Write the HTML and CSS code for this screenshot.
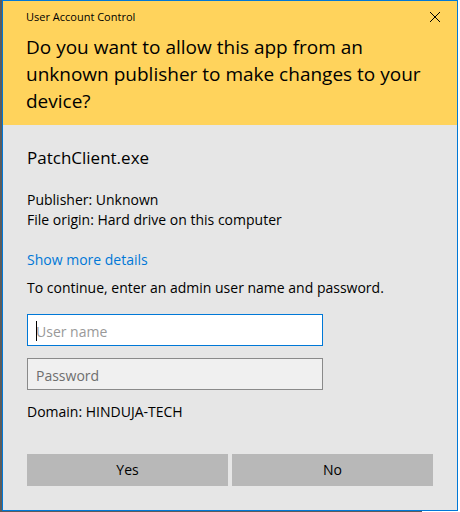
FILE: index.html
```html
<!DOCTYPE html>
<html lang="en">
<head>
<meta charset="utf-8">
<meta name="viewport" content="width=device-width, initial-scale=1">
<title>User Account Control</title>
<link rel="stylesheet" href="styles.css">
</head>
<body>
<main class="dialog">
  <header class="banner">
    <div class="titlebar">
      <span class="caption">User Account Control</span>
      <button class="close" type="button" aria-label="Close">
        <svg class="close-icon" viewBox="0 0 10 10" aria-hidden="true"><path d="M0 0L10 10M10 0L0 10"/></svg>
      </button>
    </div>
    <h1 class="question">Do you want to allow this app from an unknown publisher to make changes to your device?</h1>
  </header>
  <form class="content">
    <h2 class="program">PatchClient.exe</h2>
    <p class="text">Publisher: Unknown</p>
    <p class="text">File origin: Hard drive on this computer</p>
    <a class="details" href="#">Show more details</a>
    <p class="text">To continue, enter an admin user name and password.</p>
    <div class="fields">
      <div class="field active">
        <span class="caret"></span>
        <input class="input" type="text" placeholder="User name" aria-label="User name">
      </div>
      <div class="field">
        <input class="input" type="password" placeholder="Password" aria-label="Password">
      </div>
    </div>
    <p class="text">Domain: HINDUJA-TECH</p>
    <div class="actions">
      <button class="action" type="button">Yes</button>
      <button class="action" type="button">No</button>
    </div>
  </form>
</main>
<div class="backdrop-edge"></div>
</body>
</html>
```
FILE: styles.css
```css
* {
  box-sizing: border-box;
}

body {
  margin: 0;
  padding-right: 2px;
  background: #fff;
  color: #000;
  font: 14px/20px "Open Sans", "Noto Sans", sans-serif;
}

h1, h2, p {
  margin: 0;
  font-weight: 400;
}

.dialog {
  border: 1px solid #0078d7;
  background: #e6e6e6;
  margin-left: 2px;
  box-shadow: -2px 0 #5c5c5c;
}

.banner {
  padding: 4px 17px 10px 23px;
  background: #ffd35c;
}

.titlebar {
  display: flex;
  align-items: center;
  justify-content: space-between;
  height: 24px;
}

.caption {
  font-size: 11px;
}

.close {
  display: flex;
  padding: 0;
  border: 0;
  background: none;
}

.close-icon {
  width: 10px;
  height: 10px;
  overflow: visible;
  fill: none;
  stroke: #000;
  stroke-width: 1;
}

.question {
  padding-top: 5px;
  font-size: 19px;
  line-height: 27px;
}

.content {
  display: flex;
  flex-direction: column;
  padding: 21px 24px 24px;
}

.program {
  margin-bottom: 20px;
  font-size: 17px;
  line-height: 24px;
}

.details {
  align-self: flex-start;
  margin: 20px 0 8px;
  color: #0078d7;
  text-decoration: none;
}

.fields {
  display: grid;
  gap: 12px;
  max-width: 296px;
  margin: 16px 0 12px;
}

.field {
  position: relative;
  height: 32px;
  border: 1px solid #8a8a8a;
  background: #f0f0f0;
}

.input {
  width: 100%;
  height: 100%;
  padding: 2px 8px 0;
  border: 0;
  outline: 0;
  background: none;
  font: inherit;
}

.input::placeholder {
  color: #6e6e6e;
  opacity: 1;
}

.active {
  border-color: #0078d7;
  background: #fff;
}

.active .input::placeholder {
  color: #999;
}

.caret {
  position: absolute;
  top: 6px;
  left: 8px;
  width: 1px;
  height: 20px;
  background: #000;
}

.actions {
  display: grid;
  grid-template-columns: 1fr 1fr;
  gap: 4px;
  margin-top: 32px;
}

.action {
  height: 32px;
  padding: 0;
  border: 0;
  background: #b8b8b8;
  color: #000;
  font: inherit;
}

.backdrop-edge {
  height: 1px;
  margin-right: 36px;
  background: #5c5c5c;
}
```
